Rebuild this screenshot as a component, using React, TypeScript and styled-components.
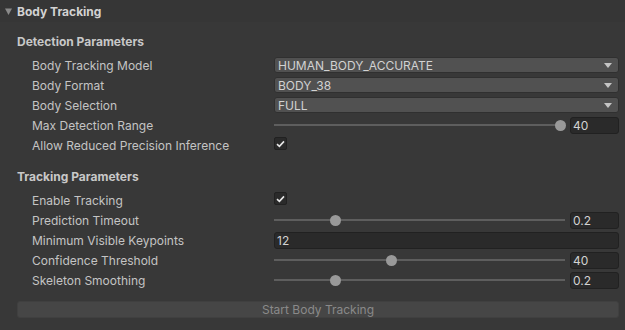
import React from "react";
import styled, { createGlobalStyle } from "styled-components";

const Global = createGlobalStyle`
  html, body { margin: 0; padding: 0; background: #383838; }
  body { font-family: Inter, "Noto Sans", sans-serif; font-size: 12px; color: #c4c4c4; }
`;

const Panel = styled.div`
  width: 625px;
  height: 330px;
  background: #383838;
  box-sizing: border-box;
  overflow: hidden;
`;

const Header = styled.div`
  height: 22px;
  display: flex;
  align-items: center;
  padding-left: 5px;
  gap: 5px;
  background: #363636;
  font-weight: 700;
  color: #d2d2d2;
  font-size: 12px;
`;

const Caret = styled.svg`
  width: 7px;
  height: 7px;
  flex: none;
`;

const Content = styled.div`
  padding: 0 6px 0 17px;
  display: flex;
  flex-direction: column;
`;

const SectionTitle = styled.div<{ $top: number }>`
  height: 20px;
  margin-top: ${(p) => p.$top}px;
  margin-bottom: 4px;
  display: flex;
  align-items: center;
  font-weight: 700;
  color: #c8c8c8;
`;

const Row = styled.div`
  height: 20px;
  display: grid;
  grid-template-columns: 257px 1fr;
  align-items: center;
`;

const Label = styled.div`
  padding-left: 15px;
  color: #c4c4c4;
  white-space: nowrap;
`;

const Dropdown = styled.div`
  height: 16px;
  box-sizing: border-box;
  background: #515151;
  border: 1px solid #303030;
  border-radius: 3px;
  display: flex;
  align-items: center;
  justify-content: space-between;
  padding: 0 6px 0 3px;
  color: #d2d2d2;
`;

const Arrow = styled.svg`
  width: 8px;
  height: 5px;
`;

const Field = styled.div<{ $width?: number }>`
  height: 17px;
  box-sizing: border-box;
  background: #2a2a2a;
  border: 1px solid #212121;
  border-radius: 3px;
  display: flex;
  align-items: center;
  padding-left: 2px;
  color: #d2d2d2;
  width: ${(p) => (p.$width ? `${p.$width}px` : "auto")};
  flex: none;
`;

const SliderWrap = styled.div`
  display: flex;
  align-items: center;
  gap: 5px;
`;

const Track = styled.div`
  position: relative;
  flex: 1;
  height: 2px;
  background: #5e5e5e;
`;

const Knob = styled.div`
  position: absolute;
  top: 50%;
  width: 11px;
  height: 11px;
  margin: -5.5px 0 0 -5.5px;
  border-radius: 50%;
  background: #999999;
`;

const KnobArea = styled.div`
  position: absolute;
  left: 5px;
  right: 5px;
  top: 0;
  bottom: 0;
`;

const Check = styled.div`
  width: 13px;
  height: 13px;
  box-sizing: border-box;
  background: #2a2a2a;
  border: 1px solid #212121;
  border-radius: 2px;
  display: flex;
  align-items: center;
  justify-content: center;
  margin-top: -3px;
`;

const Button = styled.div`
  margin-top: 11px;
  height: 17px;
  box-sizing: border-box;
  background: #464646;
  border: 1px solid #404040;
  border-radius: 3px;
  display: flex;
  align-items: center;
  justify-content: center;
  color: #8a8a8a;
`;

const DropdownField = ({ value }: { value: string }) => (
  <Dropdown>
    <span>{value}</span>
    <Arrow viewBox="0 0 8 5">
      <path d="M0 0 L8 0 L4 5 Z" fill="#c4c4c4" />
    </Arrow>
  </Dropdown>
);

const Slider = ({ frac, value }: { frac: number; value: string }) => (
  <SliderWrap>
    <Track>
      <KnobArea>
        <Knob style={{ left: `${frac * 100}%` }} />
      </KnobArea>
    </Track>
    <Field $width={49}>{value}</Field>
  </SliderWrap>
);

const Checkbox = () => (
  <Check>
    <svg width="9" height="8" viewBox="0 0 9 8">
      <path d="M1 4.2 L3.4 6.4 L8 1.4" fill="none" stroke="#e6e6e6" strokeWidth="1.6" />
    </svg>
  </Check>
);

export default function App() {
  return (
    <Panel>
      <Global />
      <Header>
        <Caret viewBox="0 0 7 7">
          <path d="M0 0.5 L7 0.5 L3.5 7 Z" fill="#8a8a8a" />
        </Caret>
        Body Tracking
      </Header>
      <Content>
        <SectionTitle $top={9}>Detection Parameters</SectionTitle>
        <Row>
          <Label>Body Tracking Model</Label>
          <DropdownField value="HUMAN_BODY_ACCURATE" />
        </Row>
        <Row>
          <Label>Body Format</Label>
          <DropdownField value="BODY_38" />
        </Row>
        <Row>
          <Label>Body Selection</Label>
          <DropdownField value="FULL" />
        </Row>
        <Row>
          <Label>Max Detection Range</Label>
          <Slider frac={1} value="40" />
        </Row>
        <Row>
          <Label>Allow Reduced Precision Inference</Label>
          <Checkbox />
        </Row>
        <SectionTitle $top={11}>Tracking Parameters</SectionTitle>
        <Row>
          <Label>Enable Tracking</Label>
          <Checkbox />
        </Row>
        <Row>
          <Label>Prediction Timeout</Label>
          <Slider frac={0.2} value="0.2" />
        </Row>
        <Row>
          <Label>Minimum Visible Keypoints</Label>
          <Field>12</Field>
        </Row>
        <Row>
          <Label>Confidence Threshold</Label>
          <Slider frac={0.4} value="40" />
        </Row>
        <Row>
          <Label>Skeleton Smoothing</Label>
          <Slider frac={0.2} value="0.2" />
        </Row>
        <Button>Start Body Tracking</Button>
      </Content>
    </Panel>
  );
}
